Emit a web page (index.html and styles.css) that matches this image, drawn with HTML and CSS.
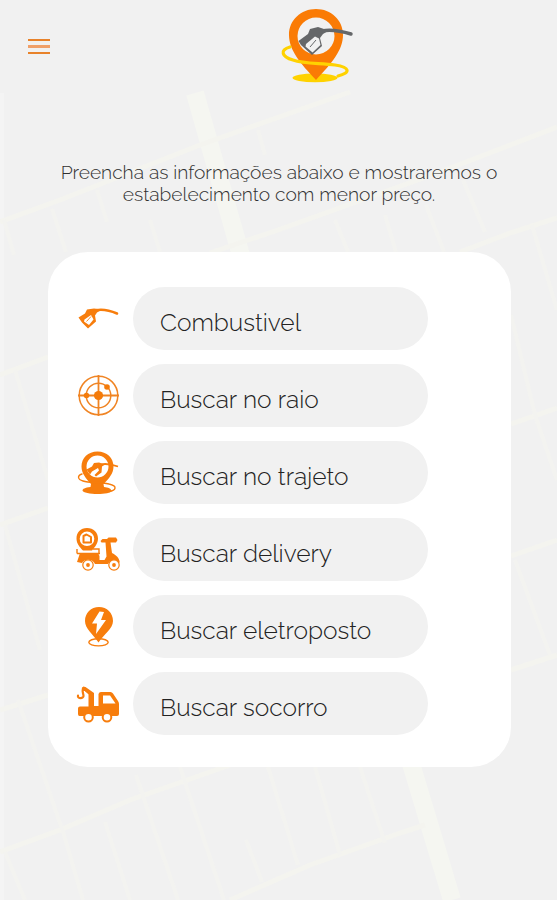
FILE: index.html
```html
<!DOCTYPE html>
<html lang="pt-BR">
  <head>
    <meta charset="UTF-8" />
    <meta name="viewport" content="width=device-width, initial-scale=1.0" />
    <title>Buscar combustivel</title>
    <link rel="stylesheet" href="styles.css">
  </head>
  <body>
    <!-- street map behind the page -->
    <svg class="map" viewBox="0 0 557 900" aria-hidden="true">
      <path class="edge" d="M2 93V900" />
      <path class="avenue" d="M195 93L240 252L412 767L452 900" />
      <path class="street" d="M0 222L60 200L200 145L350 92M557 127L440 172L278 230L210 253M557 218L510 233L460 252M557 408L511 424M557 540L511 556M557 655L511 670M0 375L48 357M0 525L48 508M0 710L48 695M0 852L60 830L130 800L230 765M230 900L310 865L400 833L425 825" />
      <path class="lane" d="M258 130L265 155M97 190L107 222M52 209L66 252M150 220L160 252M335 220L348 252M385 215L396 252M426 205L444 252M463 180L485 232M532 225L557 310M511 315L535 415M535 415L557 480M515 560L550 655M4 220L14 255M15 370L48 480M5 525L40 650M18 700L64 835L83 900M5 852L25 900M105 822L130 900M136 775L178 900M180 767L224 900M268 767L298 865M315 767L340 855M360 767L385 843M246 840L262 882" />
    </svg>

    <header class="header">
      <button class="menu" type="button" aria-label="Menu">
        <span></span>
        <span></span>
        <span></span>
      </button>
      <svg class="logo" viewBox="0 0 95 95" aria-hidden="true">
        <ellipse cx="45" cy="77.8" rx="22.5" ry="4.4" fill="#ffd200" />
        <path fill="#fa7b05" fill-rule="evenodd" d="M46 9C31 9 19 20 19 35C19 50 30 63 46 80C62 63 73 50 73 35C73 20 61 9 46 9ZM46 17.5A18.5 18.5 0 1 1 46 54.5A18.5 18.5 0 1 1 46 17.5Z" />
        <path fill="none" stroke="#ffd200" stroke-width="3.2" stroke-linecap="round" d="M20 47C9 50 12 57 23 60C34 64 50 63 65 65C80 67 81 73 68 76" />
        <path fill="none" stroke="#656769" stroke-width="3.4" stroke-linecap="round" d="M52 31C61 29 71 31 81 34" />
        <path fill="#656769" d="M28.5 41L38 34L40 29L48 27L54 29L58 31L53 34L50 38L52 46L42 55L31 45Z" />
        <path fill="#f1f1f1" d="M36 44L45 36.5L49 38.5L50.5 45L42.5 52.5L35.5 46.5Z" />
        <path fill="none" stroke="#656769" stroke-width="1" d="M40 47L46 40" />
      </svg>
    </header>

    <main>
      <p class="intro">
        Preencha as informações abaixo e mostraremos o<br />
        estabelecimento com menor preço.
      </p>

      <section class="card">
        <div class="row">
          <svg class="icon" viewBox="0 -1.5 65 60" aria-hidden="true">
            <path fill="none" stroke="#f77d0c" stroke-width="2.6" stroke-linecap="round" d="M31 19.7C38 18.5 45 20 52 23" />
            <path fill="#f77d0c" d="M13.5 27L20 23L22 19L29 18L37 19L32 22L30 25L31 31L23 38L17 32Z" />
            <path fill="#fff" d="M19.5 29L26 24.5L28.5 29L24 34.5L19 31Z" />
            <path stroke="#f77d0c" stroke-width=".9" d="M21.5 31L26 26" />
          </svg>
          <button class="option" type="button">Combustivel</button>
        </div>

        <div class="row">
          <svg class="icon" viewBox="0 0.5 65 60" aria-hidden="true">
            <g fill="none" stroke="#f08423" stroke-width="1.5">
              <circle cx="33.5" cy="30" r="19.3" />
              <circle cx="33.5" cy="30" r="12.3" />
              <path stroke-width="1.8" d="M13 30H54M33.5 9.5V50.5" />
            </g>
            <g fill="#f47b0a">
              <circle cx="33.5" cy="30" r="4.6" />
              <circle cx="21.5" cy="30" r="2.8" />
              <circle cx="42" cy="21.5" r="2.8" />
            </g>
          </svg>
          <button class="option" type="button">Buscar no raio</button>
        </div>

        <div class="row">
          <svg class="icon" viewBox="0 2.5 65 60" aria-hidden="true">
            <path fill="#f77d0c" fill-rule="evenodd" d="M32.5 11C23 11 16.5 17.5 16.5 26C16.5 33 21 38 26 43.5L25.5 46.5C20 47 17.5 48.5 17.5 50C18 54.5 46 54.5 46.5 50.5C46.5 48 43 47 39 46.5L38.5 43.5C44 38 48.5 33 48.5 26C48.5 17.5 42 11 32.5 11ZM32.5 15A11 11 0 1 1 32.5 37A11 11 0 1 1 32.5 15Z" />
            <path fill="none" stroke="#f77d0c" stroke-width="1.4" stroke-linecap="round" d="M17 33.5C12 35 12.5 39 18 40.5C25 43 34 41 44 43.5C53 45.5 51 50 44 51" />
            <path fill="none" stroke="#f77d0c" stroke-width="1.8" d="M36 24C42 22.5 47 24 53 26" />
            <path fill="#f77d0c" d="M21.5 29L27 26L29 22.5L34 22L40 24L37 26L36.5 32L31 36L29.5 34.5L34 30L33 27.5L27 31L25 34Z" />
          </svg>
          <button class="option" type="button">Buscar no trajeto</button>
        </div>

        <div class="row">
          <svg class="icon" viewBox="0 -0.5 65 60" aria-hidden="true">
            <path fill="#f77d0c" fill-rule="evenodd" d="M22 7.5C15.5 7.5 11.5 12 11.5 18C11.5 23 14.5 26.5 18 30H27C30 26.5 33 23 33 18C33 12 28.5 7.5 22 7.5ZM22 11A7.3 7.3 0 1 1 22 25.6A7.3 7.3 0 1 1 22 11Z" />
            <path fill="none" stroke="#f77d0c" stroke-width="2" stroke-linejoin="round" d="M18.5 15.5L21.5 14L26 16.5V22H18.5Z" />
            <path fill="none" stroke="#f77d0c" stroke-width="1.4" d="M12 33H35M12 28.5V33M28 28.5H34V33" />
            <path fill="#f77d0c" d="M15 32.5H33L34.5 35.5V39.5H39.5L41.5 36L40.5 22H36.5L35.5 20.5L37.5 18.5H42L43.5 17H51L52.5 19.5L51 22H45.5L47 32.5C51 34.5 54.5 37.5 54.8 42H52C50 38.5 45 39 43 43.5H30C28 38 19 38 17 42.5L12 41.5Z" />
            <g fill="#fff" stroke="#f77d0c" stroke-width="1.2">
              <circle cx="23" cy="44.5" r="5.2" />
              <circle cx="49" cy="44.5" r="5.2" />
            </g>
            <g fill="#f77d0c">
              <circle cx="23" cy="44.5" r="1.9" />
              <circle cx="49" cy="44.5" r="1.9" />
            </g>
          </svg>
          <button class="option" type="button">Buscar delivery</button>
        </div>

        <div class="row">
          <svg class="icon" viewBox="0 -1 65 60" aria-hidden="true">
            <ellipse cx="33.5" cy="44.3" rx="9.7" ry="3.6" fill="#fff" stroke="#f77d0c" stroke-width="1.4" />
            <path fill="#f77d0c" d="M34 9C26 9 20 15 20 23C20 31 28 36 33.5 44.5C39 36 48 31 48 23C48 15 42 9 34 9Z" />
            <path fill="#fff" d="M34.5 13.5L27 25.5H32L31 36L41 22H36L39 14Z" />
          </svg>
          <button class="option" type="button">Buscar eletroposto</button>
        </div>

        <div class="row">
          <svg class="icon" viewBox="0 -1 65 60" aria-hidden="true">
            <path fill="none" stroke="#f77d0c" stroke-width="2.2" stroke-linecap="round" stroke-linejoin="round" d="M13 20.5C12 24 19 24 18.5 20.5C18 17.5 17 17 18 13L26 20" />
            <path fill="#f77d0c" d="M18 11.5L20.5 12L29 18V31H33.5V19Q34 17 36 17H45.5Q47 17 48 18.5L53 26Q54 27.5 54 29V39Q54 41 52 41H14.5Q13 41 13 39V33.5Q13 31.5 15 31.5H23.5V19L18 14.5Z" />
            <path fill="#fff" d="M38 20.5H45L50.5 28.5H38Z" />
            <g fill="#fff" stroke="#f77d0c" stroke-width="2">
              <circle cx="23.5" cy="42.3" r="4.3" />
              <circle cx="42" cy="42.3" r="4.3" />
            </g>
          </svg>
          <button class="option" type="button">Buscar socorro</button>
        </div>
      </section>
    </main>
  </body>
</html>
```

FILE: styles.css
```css
body {
  margin: 0;
  height: 900px;
  overflow: hidden;
  background-color: #f1f1f1;
  font-family: Raleway, Lato, sans-serif;
  color: #303030;
}
.map {
  position: absolute;
  z-index: -1;
  top: 0;
  left: 0;
  width: 557px;
  height: 900px;
  fill: none;
}
.edge {
  stroke: #f4f4f4;
  stroke-width: 4;
}
.avenue {
  stroke: #f5f6f1;
  stroke-width: 18;
}
.street {
  stroke: #f4f4ef;
  stroke-width: 5;
}
.lane {
  stroke: #f3f3f0;
  stroke-width: 4;
}
.header {
  display: flex;
  align-items: flex-start;
  height: 95px;
  padding-left: 28px;
}
.menu {
  display: flex;
  flex-direction: column;
  justify-content: space-between;
  width: 22px;
  height: 15px;
  margin-top: 39px;
  margin-right: 220px;
  padding: 0;
  border: none;
  background: none;
}
.menu span {
  height: 2px;
  background-color: #e8822a;
}
.menu span:nth-child(2) {
  height: 3px;
  background-color: #f0a069;
}
.logo {
  width: 95px;
  height: 95px;
}
.intro {
  margin: 66px 0 0;
  height: 91px;
  padding-left: 1px;
  font-size: 19.2px;
  font-weight: 300;
  line-height: 22px;
  text-align: center;
  white-space: nowrap;
}
.card {
  display: flex;
  flex-direction: column;
  gap: 14px;
  box-sizing: border-box;
  width: 463px;
  height: 515px;
  margin-left: 48px;
  padding: 35px 0 0 17px;
  border-radius: 40px;
  background-color: #fff;
}
.row {
  display: flex;
  align-items: center;
  gap: 3px;
  height: 63px;
}
.icon {
  width: 65px;
  height: 60px;
}
.option {
  width: 295px;
  height: 63px;
  padding: 7px 0 0 27px;
  border: none;
  border-radius: 32px;
  background-color: #f1f1f1;
  color: #222;
  font-family: inherit;
  font-size: 24.5px;
  font-weight: 300;
  text-align: left;
  white-space: nowrap;
  cursor: pointer;
}
```
